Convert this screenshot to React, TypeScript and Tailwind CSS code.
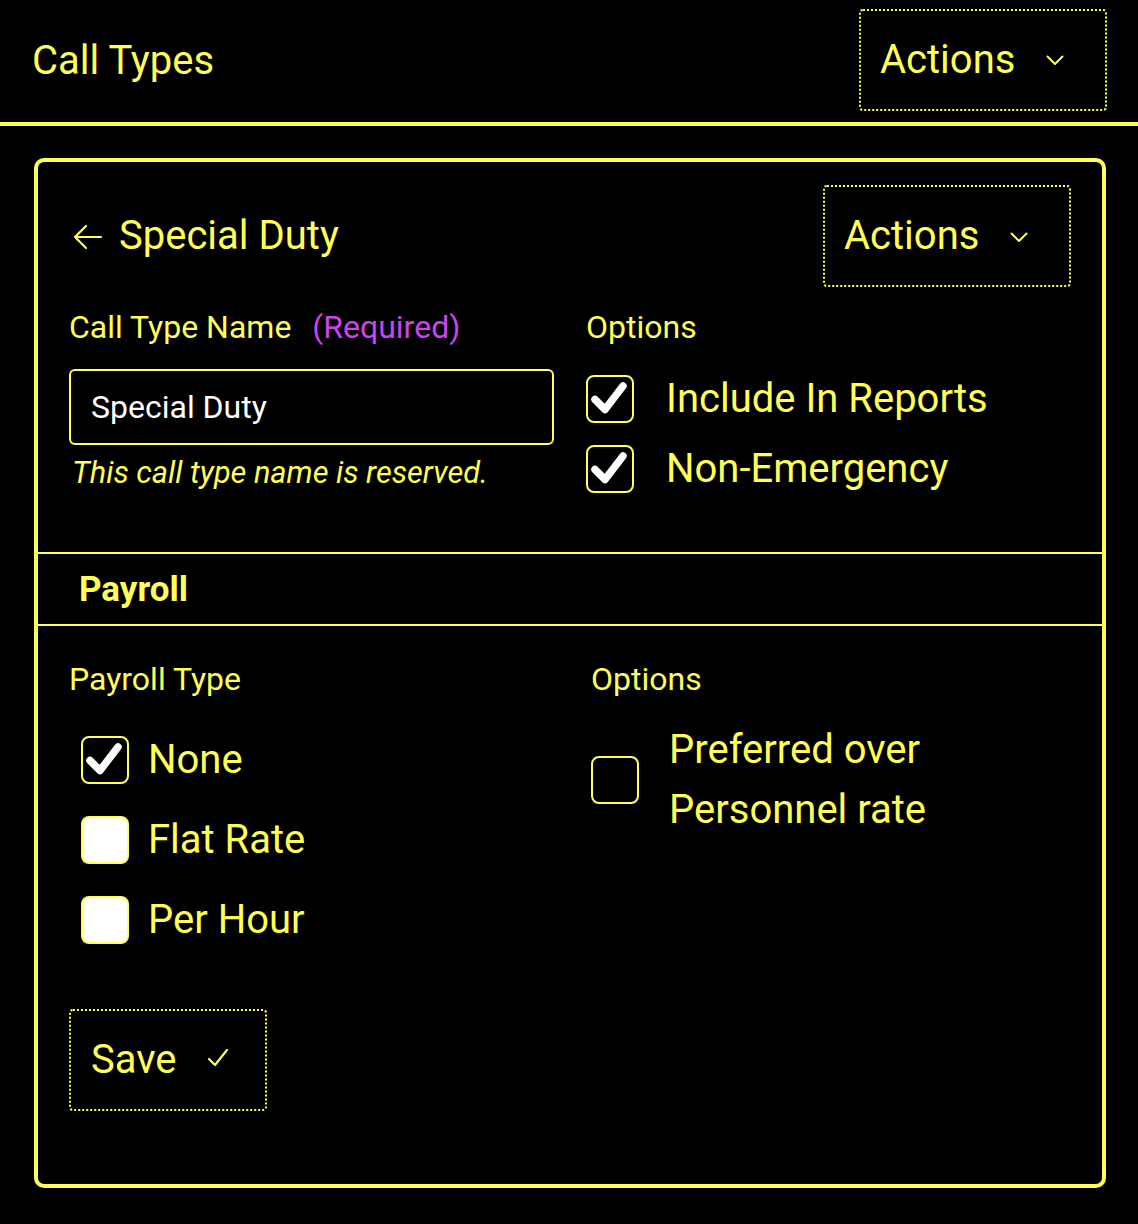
import React from "react";

function Chevron() {
  return (
    <svg width="18" height="11" viewBox="0 0 18 11" fill="none">
      <path d="M1.5 1.5 L9 9 L16.5 1.5" stroke="#ffff55" strokeWidth="2" strokeLinecap="round" strokeLinejoin="round" />
    </svg>
  );
}

function ActionsButton() {
  return (
    <button className="flex h-[102px] w-[248px] items-center rounded-[4px] border-2 border-dotted border-[#ffff55] pl-[19px] text-[40px] leading-none text-[#ffff55]">
      <span>Actions</span>
      <span className="ml-[31px] mt-[2px] flex"><Chevron /></span>
    </button>
  );
}

function Check() {
  return (
    <svg width="48" height="48" viewBox="0 0 48 48" className="absolute left-[-2px] top-[-2px]">
      <path d="M9 24.5 L19 34.5 L37 11" fill="none" stroke="#ffffff" strokeWidth="7.5" strokeLinecap="round" strokeLinejoin="round" />
    </svg>
  );
}

function Box({ checked, white }: { checked?: boolean; white?: boolean }) {
  return (
    <div
      className={
        "relative h-[48px] w-[48px] shrink-0 rounded-[8px] border-2 border-[#ffff55] " +
        (white ? "bg-white" : "bg-black")
      }
    >
      {checked && <Check />}
    </div>
  );
}

export default function App() {
  return (
    <div className="min-h-[1224px] w-full bg-black pb-[36px] text-[#ffff55]" style={{ fontFamily: "Roboto, 'Noto Sans', sans-serif" }}>
      {/* Header */}
      <div className="flex h-[126px] items-center justify-between border-b-4 border-[#ffff55] pl-[32px] pr-[31px]">
        <h1 className="text-[40px] leading-none font-normal">Call Types</h1>
        <div className="mb-[3px]"><ActionsButton /></div>
      </div>

      {/* Card */}
      <div className="ml-[34px] mr-[32px] mt-[32px] rounded-[10px] border-4 border-[#ffff55]">
        {/* Top section */}
        <div className="px-[31px] pb-[53px] pt-[23px]">
          <div className="flex items-center justify-between">
            <div className="flex items-center">
              <svg width="30" height="26" viewBox="0 0 30 26" fill="none" className="ml-[4px] mt-[1px]">
                <path d="M28 13 H2 M13 2 L2 13 L13 24" stroke="#ffff55" strokeWidth="2.2" strokeLinecap="round" strokeLinejoin="round" />
              </svg>
              <span className="ml-[16px] text-[40px] leading-none">Special Duty</span>
            </div>
            <ActionsButton />
          </div>

          <div className="mt-[20px] grid grid-cols-[485px_1fr] gap-x-[32px]">
            <div>
              <div className="flex h-[40px] items-center text-[32px] leading-none">
                <span>Call Type Name</span>
                <span className="ml-[21px] text-[#cc44ee]">(Required)</span>
              </div>
              <div className="mt-[22px] flex h-[76px] items-center rounded-[6px] border-2 border-[#ffff55] pl-[20px] text-[32px] leading-none text-white">
                Special Duty
              </div>
              <div className="mt-[8px] flex h-[40px] items-center pl-[3px] text-[30.7px] italic leading-none">
                This call type name is reserved.
              </div>
            </div>
            <div>
              <div className="flex h-[40px] items-center text-[32px] leading-none">Options</div>
              <div className="mt-[22px] flex h-[60px] items-center">
                <Box checked />
                <span className="ml-[32px] text-[40px] leading-none">Include In Reports</span>
              </div>
              <div className="mt-[10px] flex h-[60px] items-center">
                <Box checked />
                <span className="ml-[32px] text-[40px] leading-none">Non-Emergency</span>
              </div>
            </div>
          </div>
        </div>

        {/* Payroll header */}
        <div className="flex h-[74px] items-center border-y-2 border-[#ffff55] pl-[41px] text-[35px] font-bold leading-none">
          Payroll
        </div>

        {/* Bottom section */}
        <div className="px-[31px] pb-[73px] pt-[33px]">
          <div className="grid grid-cols-[522px_1fr]">
            <div>
              <div className="flex h-[40px] items-center text-[32px] leading-none">Payroll Type</div>
              <div className="mt-[21px]">
                {[
                  { label: "None", checked: true, white: false },
                  { label: "Flat Rate", checked: false, white: true },
                  { label: "Per Hour", checked: false, white: true },
                ].map((r) => (
                  <div key={r.label} className="flex h-[80px] items-center pl-[12px]">
                    <Box checked={r.checked} white={r.white} />
                    <span className="ml-[19px] text-[40px] leading-none">{r.label}</span>
                  </div>
                ))}
              </div>
            </div>
            <div>
              <div className="flex h-[40px] items-center text-[32px] leading-none">Options</div>
              <div className="mt-[21px] flex items-center">
                <Box />
                <div className="ml-[30px] text-[40px] leading-[60px]">
                  <div>Preferred over</div>
                  <div>Personnel rate</div>
                </div>
              </div>
            </div>
          </div>

          <button className="mt-[49px] flex h-[102px] w-[198px] items-center rounded-[4px] border-2 border-dotted border-[#ffff55] pl-[20px] text-[40px] leading-none text-[#ffff55]">
            <span>Save</span>
            <svg width="22" height="20" viewBox="0 0 22 20" fill="none" className="ml-[30px] mt-[-4px]">
              <path d="M2 11 L8 17 L20 2" stroke="#ffff55" strokeWidth="2.2" strokeLinecap="round" strokeLinejoin="round" />
            </svg>
          </button>
        </div>
      </div>
    </div>
  );
}
